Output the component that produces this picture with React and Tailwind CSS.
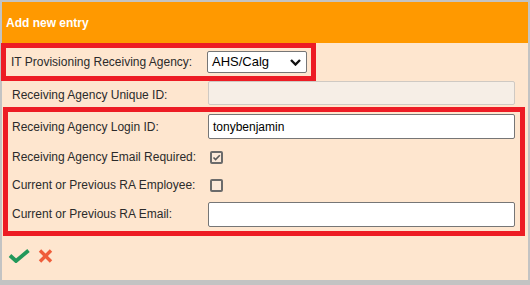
import React from "react";

const font = { fontFamily: '"Liberation Sans", Arial, sans-serif' };

function Label({ children }) {
  return <div className="w-[200px] shrink-0 pl-[4px] text-[12px] text-[#2b2b2b]">{children}</div>;
}

function Checkbox({ checked }) {
  return (
    <div className="w-[13px] h-[13px] rounded-[2px] border-[2px] border-[#6b6b6b] bg-[#fbe9d9] flex items-center justify-center">
      {checked && (
        <svg width="9" height="9" viewBox="0 0 9 9">
          <polyline points="1.5,4.5 3.6,6.6 7.8,2.2" fill="none" stroke="#5a5a5a" strokeWidth="1.6" />
        </svg>
      )}
    </div>
  );
}

export default function App() {
  return (
    <div style={font} className="w-[530px] h-[285px] bg-[#c3c3c3] pt-[2px] pl-[2px] pr-[2px] pb-[5px]">
      <div className="h-full bg-[#fee6cf] flex flex-col">
        {/* header */}
        <div className="h-[41px] shrink-0 bg-[#ff9900] pl-[4px] flex items-center text-[12px] font-bold text-white">
          Add new entry
        </div>

        {/* agency select (highlighted) */}
        <div className="-ml-[1px] w-[315px] h-[38px] border-[5px] border-[#ed1c24] flex items-center">
          <div className="w-[201px] shrink-0 pl-[5px] text-[12px] text-[#2b2b2b]">IT Provisioning Receiving Agency:</div>
          <div className="w-[100px] h-[22px] border border-[#767676] rounded-[2px] bg-white flex items-center justify-between pl-[4px] pr-[5px] text-[13px] text-black">
            <span>AHS/Calg</span>
            <svg width="11" height="7" viewBox="0 0 11 7">
              <polyline points="1,1 5.5,5.5 10,1" fill="none" stroke="#111" strokeWidth="2.4" />
            </svg>
          </div>
        </div>

        {/* unique id */}
        <div className="h-[26px] flex items-start">
          <div className="w-[206px] shrink-0 pl-[10px] pt-[5px] text-[12px] text-[#2b2b2b]">Receiving Agency Unique ID:</div>
          <div className="w-[307px] h-[24px] border border-[#cfc9c3] rounded-[2px] bg-[#f6eee6]" />
        </div>

        {/* login / email block (highlighted) */}
        <div className="ml-[1px] w-[522px] border-[5px] border-[#ed1c24] flex flex-col">
          <div className="h-[29px] flex items-center">
            <Label>Receiving Agency Login ID:</Label>
            <div className="w-[307px] h-[25px] border border-[#767676] rounded-[2px] bg-white flex items-center pl-[4px] text-[12px] text-black">
              tonybenjamin
            </div>
          </div>
          <div className="h-[32px] flex items-center">
            <Label>Receiving Agency Email Required:</Label>
            <div className="pl-[2px]"><Checkbox checked /></div>
          </div>
          <div className="h-[24px] flex items-center">
            <Label>Current or Previous RA Employee:</Label>
            <div className="pl-[2px]"><Checkbox /></div>
          </div>
          <div className="h-[34px] flex items-center">
            <Label>Current or Previous RA Email:</Label>
            <div className="w-[307px] h-[25px] border border-[#767676] rounded-[2px] bg-white" />
          </div>
        </div>

        {/* actions */}
        <div className="flex items-center gap-[8px] pl-[6px] pt-[13px]">
          <svg width="22" height="14" viewBox="0 0 22 14">
            <polyline points="2,6.5 8,12 20.5,1.5" fill="none" stroke="#22985a" strokeWidth="3.8" />
          </svg>
          <svg width="15" height="14" viewBox="0 0 15 14">
            <path d="M2,1.5 L13,12.5 M13,1.5 L2,12.5" fill="none" stroke="#ef5d3a" strokeWidth="3.4" />
          </svg>
        </div>
      </div>
    </div>
  );
}
